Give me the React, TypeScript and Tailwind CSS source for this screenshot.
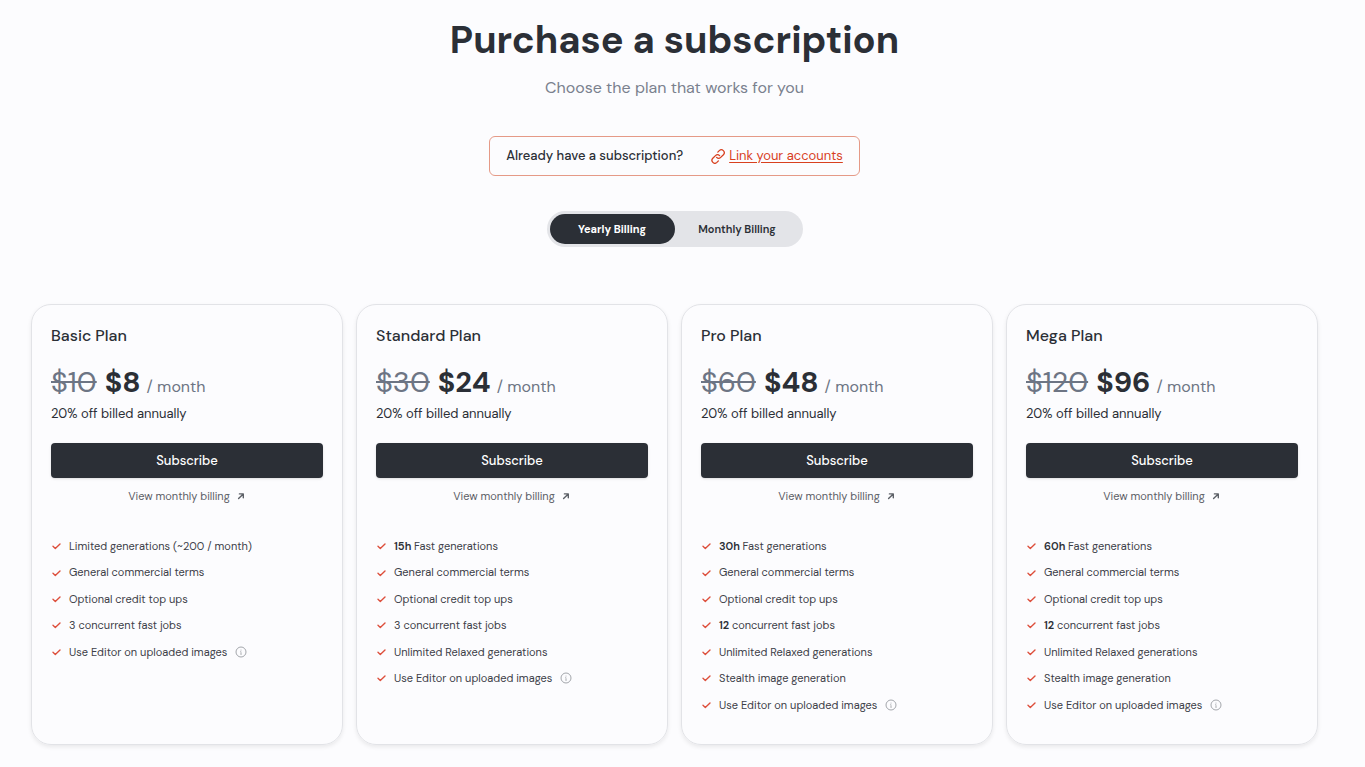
type Feature = { lead?: string; text: string; info?: boolean };
type Plan = { name: string; was: string; now: string; features: Feature[] };

const terms: Feature = { text: "General commercial terms" };
const topUps: Feature = { text: "Optional credit top ups" };
const relaxed: Feature = { text: "Unlimited Relaxed generations" };
const stealth: Feature = { text: "Stealth image generation" };
const editor: Feature = { text: "Use Editor on uploaded images", info: true };

const plans: Plan[] = [
  {
    name: "Basic Plan",
    was: "$10",
    now: "$8",
    features: [{ text: "Limited generations (~200 / month)" }, terms, topUps, { text: "3 concurrent fast jobs" }, editor],
  },
  {
    name: "Standard Plan",
    was: "$30",
    now: "$24",
    features: [{ lead: "15h", text: "Fast generations" }, terms, topUps, { text: "3 concurrent fast jobs" }, relaxed, editor],
  },
  {
    name: "Pro Plan",
    was: "$60",
    now: "$48",
    features: [
      { lead: "30h", text: "Fast generations" },
      terms,
      topUps,
      { lead: "12", text: "concurrent fast jobs" },
      relaxed,
      stealth,
      editor,
    ],
  },
  {
    name: "Mega Plan",
    was: "$120",
    now: "$96",
    features: [
      { lead: "60h", text: "Fast generations" },
      terms,
      topUps,
      { lead: "12", text: "concurrent fast jobs" },
      relaxed,
      stealth,
      editor,
    ],
  },
];

function LinkIcon() {
  return (
    <svg viewBox="0 0 16 16" className="size-4 shrink-0" fill="none" stroke="currentColor" strokeWidth="1.3" strokeLinecap="round" strokeLinejoin="round" aria-hidden="true">
      <path d="M6.6 9.4a2.9 2.9 0 0 0 4.1 0l2.7-2.7a2.9 2.9 0 0 0-4.1-4.1L7.8 4.1" />
      <path d="M9.6 7.6a2.9 2.9 0 0 0-4.1 0l-2.7 2.7a2.9 2.9 0 0 0 4.1 4.1l1.5-1.5" />
    </svg>
  );
}

function CheckIcon() {
  return (
    <svg viewBox="0 0 12 12" className="size-3 shrink-0 text-[#dd4f3c]" fill="none" stroke="currentColor" strokeWidth="1.4" strokeLinecap="round" strokeLinejoin="round" aria-hidden="true">
      <path d="M2 6.3 4.3 8.4 9 4" />
    </svg>
  );
}

function ArrowIcon() {
  return (
    <svg viewBox="0 0 10 10" className="size-2.5 shrink-0" fill="none" stroke="currentColor" strokeWidth="1.4" strokeLinecap="round" strokeLinejoin="round" aria-hidden="true">
      <path d="M2.6 7.6 7 3.2M3.4 2.9h3.9v3.9" />
    </svg>
  );
}

function InfoIcon() {
  return (
    <svg viewBox="0 0 12 12" className="size-3 shrink-0 text-[#a3a6ab]" fill="none" stroke="currentColor" strokeWidth="1" aria-hidden="true">
      <circle cx="6" cy="6" r="5" />
      <path d="M5.2 5.6H6v2.5M5.2 8.2h1.7" strokeWidth="0.7" />
      <circle cx="6" cy="3.9" r="0.5" fill="currentColor" stroke="none" />
    </svg>
  );
}

function PlanCard({ plan }: { plan: Plan }) {
  return (
    <section className="flex flex-col rounded-[20px] border border-[#e2e3e7] px-[19px] pt-[19px] pb-[26px] shadow-[0_2px_4px_rgba(0,0,0,0.08)]">
      <h2 className="text-base leading-6 font-medium">{plan.name}</h2>
      <p className="mt-4 flex items-baseline gap-2 leading-9">
        <s className="text-[29px] text-[#6d7584]">{plan.was}</s>
        <span className="flex items-baseline gap-1.5">
          <span className="text-[29px] font-bold">{plan.now}</span>
          <span className="text-base text-[#6d7584]">/ month</span>
        </span>
      </p>
      <p className="mt-1 text-[13px] leading-5">20% off billed annually</p>
      <button type="button" className="mt-[19px] h-[35px] rounded bg-[#2b2f36] text-[13px] font-medium text-white shadow-sm">
        Subscribe
      </button>
      <a href="#monthly" className="mt-2 flex items-center justify-center gap-1.5 text-[11px] leading-5 text-[#5c6067]">
        View monthly billing
        <ArrowIcon />
      </a>
      <ul className="mt-[27px] grid h-[185px] grid-rows-7 text-[11px] text-[#3c4048]">
        {plan.features.map((f) => (
          <li key={f.text} className="flex items-center gap-1.5">
            <CheckIcon />
            <span className="flex items-center gap-2">
              <span>
                {f.lead && <b className="font-semibold text-[#2b2f36]">{f.lead} </b>}
                {f.text}
              </span>
              {f.info && <InfoIcon />}
            </span>
          </li>
        ))}
      </ul>
    </section>
  );
}

export default function App() {
  return (
    <main className="min-h-screen bg-[#fcfcfe] pt-4 pr-[47px] pb-[22px] pl-[31px] font-['DM_Sans','Inter',sans-serif] text-[#2b2f36]">
      <header className="flex flex-col items-center">
        <h1 className="text-[38px] leading-12 font-bold">Purchase a subscription</h1>
        <p className="mt-3 text-base leading-6 text-[#7a818e]">Choose the plan that works for you</p>
        <div className="mt-9 flex h-10 items-center gap-[27px] rounded-md border border-[#e59a87] px-4 text-[13px]">
          <span className="font-medium">Already have a subscription?</span>
          <a href="#link" className="flex items-center gap-[3px] text-[#d8401f]">
            <LinkIcon />
            <span className="underline underline-offset-2">Link your accounts</span>
          </a>
        </div>
        <div className="mt-[35px] flex h-9 rounded-full bg-[#e3e4e8] p-[3px] text-[11px]">
          <button type="button" aria-pressed="true" className="w-[125px] rounded-full bg-[#2b2f36] font-bold text-white">
            Yearly Billing
          </button>
          <button type="button" aria-pressed="false" className="w-[125px] rounded-full font-semibold">
            Monthly Billing
          </button>
        </div>
      </header>
      <div className="mt-[57px] grid grid-cols-4 gap-[13px]">
        {plans.map((p) => (
          <PlanCard key={p.name} plan={p} />
        ))}
      </div>
    </main>
  );
}
